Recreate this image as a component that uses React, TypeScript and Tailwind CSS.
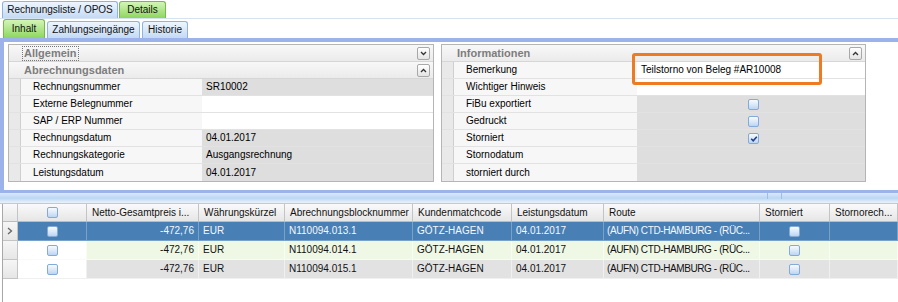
import React from "react";

const Cb = ({ checked = false }: { checked?: boolean }) => (
  <span className="relative inline-block w-[11px] h-[11px] rounded-[2px] border border-[#84aad8] bg-gradient-to-b from-[#f6faff] via-[#dce9f8] to-[#bcd5f2]">
    {checked && (
      <svg className="absolute left-[1px] top-[1px]" width="8" height="8" viewBox="0 0 8 8">
        <polyline points="1.2,3.8 3.2,5.8 6.8,1.8" fill="none" stroke="#1f3f8a" strokeWidth="1.6" />
      </svg>
    )}
  </span>
);

const Collapse = ({ up }: { up: boolean }) => (
  <span className="flex items-center justify-center w-[13px] h-[13px] rounded-[2px] border border-[#a8a8a8] bg-gradient-to-b from-white to-[#e4e4e4]">
    <svg width="7" height="5" viewBox="0 0 7 5">
      {up ? (
        <polyline points="1,4 3.5,1.5 6,4" fill="none" stroke="#333" strokeWidth="1.3" />
      ) : (
        <polyline points="1,1 3.5,3.5 6,1" fill="none" stroke="#333" strokeWidth="1.3" />
      )}
    </svg>
  </span>
);

const GroupHeader = ({ title, up, focus }: { title: string; up: boolean; focus?: boolean }) => (
  <div className="flex items-center h-[17px] border-b border-[#d6d6d6] bg-gradient-to-b from-[#f8f8f8] to-[#ebebeb] pl-[14px] pr-[3px]">
    <span
      className={
        "text-[11px] font-bold text-[#7d7d7d] leading-[13px] px-[1px] " +
        (focus ? "outline outline-1 outline-dotted outline-[#777]" : "")
      }
    >
      {title}
    </span>
    <span className="ml-auto">
      <Collapse up={up} />
    </span>
  </div>
);

type RowProps = { label: string; value?: React.ReactNode; white?: boolean; center?: boolean; labelW: string };

const DataRow = ({ label, value, white, center, labelW }: RowProps) => (
  <div className="flex h-[17px] border-b border-[#e2e2e2] last:border-b-0">
    <div className="w-[12px] bg-[#e9e9e9] border-r border-[#cfcfcf]" />
    <div className={labelW + " pl-[12px] bg-[#f7f7f7] flex items-center text-black"}>{label}</div>
    <div
      className={
        "flex-1 flex items-center pl-[4px] " +
        (white ? "bg-white" : "bg-[#dedede]") +
        (center ? " justify-center pl-0" : "")
      }
    >
      {value}
    </div>
  </div>
);

const cols = [
  { w: "w-[69px]" },
  { w: "w-[112px]", t: "Netto-Gesamtpreis i..." },
  { w: "w-[86px]", t: "Währungskürzel" },
  { w: "w-[128px]", t: "Abrechnungsblocknummer" },
  { w: "w-[99px]", t: "Kundenmatchcode" },
  { w: "w-[92px]", t: "Leistungsdatum" },
  { w: "w-[156px]", t: "Route" },
  { w: "w-[70px]", t: "Storniert" },
  { w: "flex-1", t: "Stornorech..." },
];

const rows = [
  { n: "N110094.013.1", kind: "sel" },
  { n: "N110094.014.1", kind: "green" },
  { n: "N110094.015.1", kind: "gray" },
];

export default function App() {
  return (
    <div className="relative w-[898px] h-[302px] overflow-hidden bg-white text-[10px] text-black font-['Liberation_Sans',Arial,sans-serif] leading-none">
      {/* top tabs */}
      <div className="flex items-end h-[18px] pl-[2px] gap-[1px]">
        <div className="h-[17px] w-[116px] rounded-t-[3px] border border-b-0 border-[#8fb3df] bg-gradient-to-b from-[#eef6fe] to-[#c3daf4] flex items-center justify-center text-[#111]">
          Rechnungsliste / OPOS
        </div>
        <div className="h-[17px] w-[47px] rounded-t-[3px] border border-b-0 border-[#74bb4a] bg-gradient-to-b from-[#d3f5b6] to-[#8ed65d] flex items-center justify-center text-[#111]">
          Details
        </div>
      </div>
      {/* sub tabs */}
      <div className="flex items-end h-[20px] pl-[3px] gap-[2px] border-t border-[#d4e2f2]">
        <div className="h-[19px] w-[42px] rounded-t-[3px] border border-b-0 border-[#74bb4a] bg-gradient-to-b from-[#d3f5b6] to-[#8ed65d] flex items-center justify-center text-[#111]">
          Inhalt
        </div>
        <div className="h-[17px] w-[93px] rounded-t-[3px] border border-b-0 border-[#8fb3df] bg-gradient-to-b from-[#eef6fe] to-[#c3daf4] flex items-center justify-center text-[#111]">
          Zahlungseingänge
        </div>
        <div className="h-[17px] w-[46px] rounded-t-[3px] border border-b-0 border-[#8fb3df] bg-gradient-to-b from-[#eef6fe] to-[#c3daf4] flex items-center justify-center text-[#111]">
          Historie
        </div>
      </div>

      {/* frame */}
      <div className="h-[155px] border-l-4 border-t-4 border-b-[3px] border-[#9cb2ea] bg-white pl-[4px] pt-[2px] flex gap-[7px]">
        {/* left panel */}
        <div className="w-[426px] h-[138px] border border-[#b5b5b5] bg-white flex flex-col">
          <GroupHeader title="Allgemein" up={false} focus />
          <GroupHeader title="Abrechnungsdaten" up={true} />
          <DataRow labelW="w-[181px]" label="Rechnungsnummer" value="SR10002" />
          <DataRow labelW="w-[181px]" label="Externe Belegnummer" white />
          <DataRow labelW="w-[181px]" label="SAP / ERP Nummer" white />
          <DataRow labelW="w-[181px]" label="Rechnungsdatum" value="04.01.2017" />
          <DataRow labelW="w-[181px]" label="Rechnungskategorie" value="Ausgangsrechnung" />
          <DataRow labelW="w-[181px]" label="Leistungsdatum" value="04.01.2017" />
        </div>
        {/* right panel */}
        <div className="w-[425px] h-[138px] border border-[#b5b5b5] bg-white flex flex-col">
          <GroupHeader title="Informationen" up={true} />
          <DataRow labelW="w-[183px]" label="Bemerkung" value="Teilstorno von Beleg #AR10008" white />
          <DataRow labelW="w-[183px]" label="Wichtiger Hinweis" white />
          <DataRow labelW="w-[183px]" label="FiBu exportiert" value={<Cb />} center />
          <DataRow labelW="w-[183px]" label="Gedruckt" value={<Cb />} center />
          <DataRow labelW="w-[183px]" label="Storniert" value={<Cb checked />} center />
          <DataRow labelW="w-[183px]" label="Stornodatum" />
          <DataRow labelW="w-[183px]" label="storniert durch" />
        </div>
      </div>

      {/* splitter */}
      <div className="relative h-[11px] bg-gradient-to-b from-[#d9eafb] via-[#bcd7f3] to-[#eaf2fb] border-b border-[#c8c8c8]">
        <div className="absolute left-[767px] top-0 w-[15px] h-[6px] border-x border-[#9fbfe2]" />
      </div>

      {/* grid */}
      <div className="ml-[2px] border-l border-[#a8a8a8] h-[100px]">
        <div className="flex h-[18px] border-b border-[#bcbcbc] bg-gradient-to-b from-[#fafafa] to-[#e6e6e6]">
          <div className="w-[15px] border-r border-[#c4c4c4]" />
          {cols.map((c, i) => (
            <div
              key={i}
              className={
                c.w +
                " border-r border-[#c4c4c4] flex items-center " +
                (i === 0 ? "justify-center" : "pl-[5px]")
              }
            >
              {i === 0 ? <Cb /> : <span className="whitespace-nowrap text-[#111]">{c.t}</span>}
            </div>
          ))}
        </div>
        {rows.map((r, ri) => {
          const sel = r.kind === "sel";
          const bg = sel ? "bg-[#4880b5]" : r.kind === "green" ? "bg-[#eff8e5]" : "bg-[#e2e2e2]";
          const cbBg = sel ? "bg-[#4880b5]" : "bg-white";
          const bd = sel ? "border-[#79a2cb]" : r.kind === "green" ? "border-[#f8fcf2]" : "border-[#f0f0f0]";
          const txt = sel ? "text-[#f4f7fb]" : "text-[#111]";
          const vals = ["-472,76", "EUR", r.n, "GÖTZ-HAGEN", "04.01.2017", "(AUFN) CTD-HAMBURG - (RÜC...", "cb", ""];
          return (
            <div key={ri} className={"flex h-[19px] " + txt}>
              <div className="w-[15px] border-r border-b border-[#c4c4c4] bg-gradient-to-b from-[#f6f6f6] to-[#e6e6e6] flex items-center justify-center">
                {sel && (
                  <svg width="6" height="8" viewBox="0 0 6 8">
                    <polyline points="1,1 4.5,4 1,7" fill="none" stroke="#666" strokeWidth="1.3" />
                  </svg>
                )}
              </div>
              <div className={"w-[69px] border-r border-b " + bd + " " + cbBg + " flex items-center justify-center"}>
                <Cb />
              </div>
              {vals.map((v, i) => (
                <div
                  key={i}
                  className={
                    cols[i + 1].w +
                    " border-r border-b " +
                    bd +
                    " " +
                    bg +
                    " flex items-center whitespace-nowrap overflow-hidden " +
                    (i === 0
                      ? "justify-end pr-[4px]"
                      : i === 6
                      ? "justify-center"
                      : i === 5
                      ? "pl-[3px] tracking-[-0.4px]"
                      : "pl-[4px]")
                  }
                >
                  {v === "cb" ? <Cb /> : v}
                </div>
              ))}
            </div>
          );
        })}
      </div>

      {/* orange highlight */}
      <div className="absolute left-[632px] top-[53px] w-[190px] h-[32px] border-[3px] border-[#ee7a22] rounded-[3px]" />
    </div>
  );
}
